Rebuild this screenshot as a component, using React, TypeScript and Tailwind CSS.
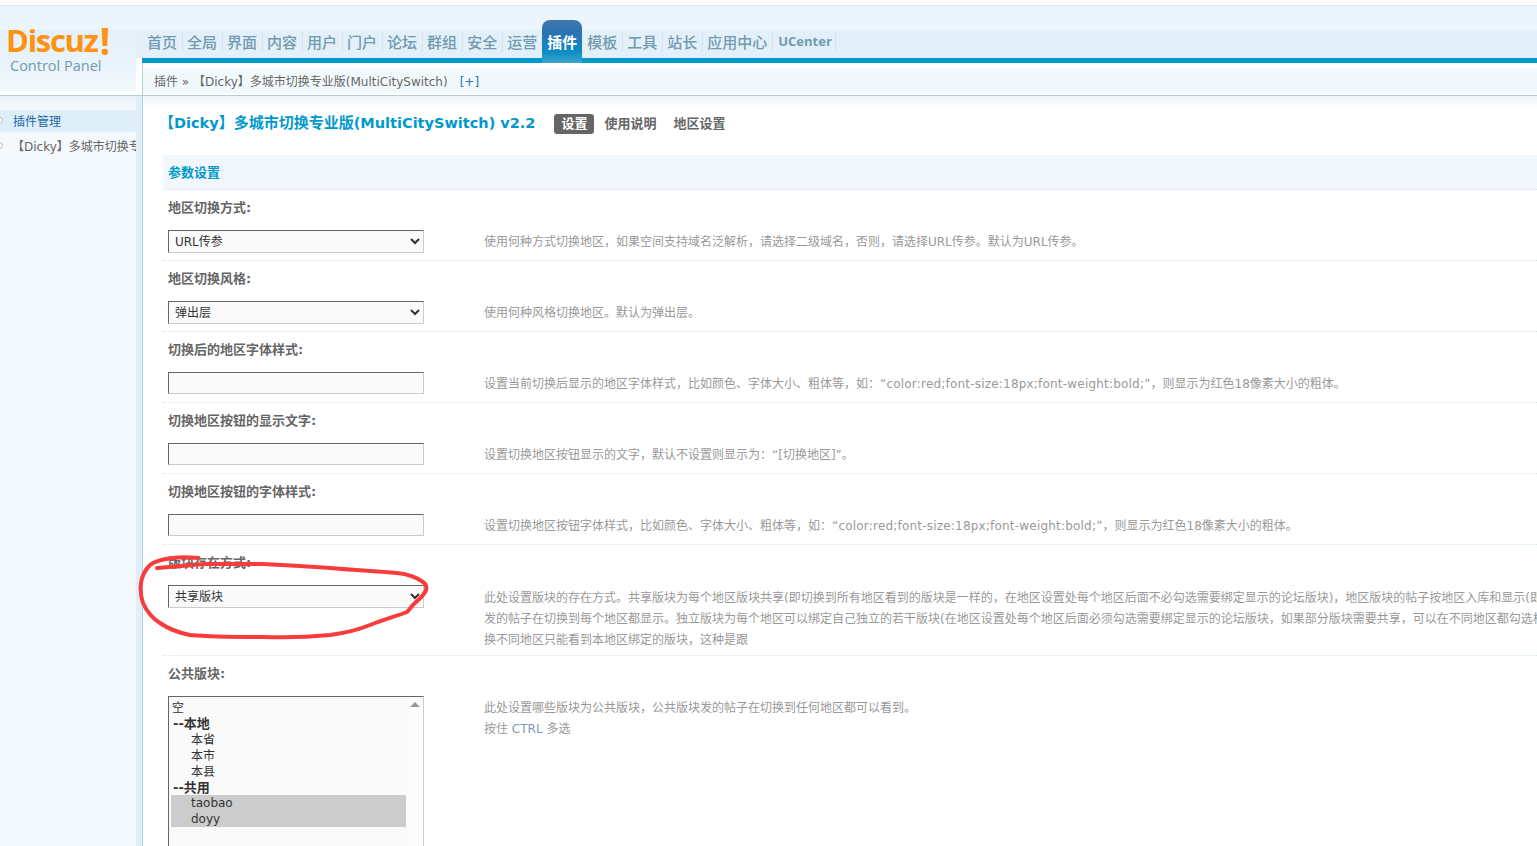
import React from 'react';

const BODY_FONT = "font-['DejaVu_Sans','Noto_Sans_CJK_SC',sans-serif]";

const NAV_ITEMS = ['首页', '全局', '界面', '内容', '用户', '门户', '论坛', '群组', '安全', '运营'];
const NAV_ITEMS_AFTER = ['模板', '工具', '站长', '应用中心'];

function NavItem({ label, lastBeforeActive }: { label: string; lastBeforeActive?: boolean }) {
  return (
    <div
      className={`mt-[26px] flex h-[20px] items-center border-r pr-[5px] font-['Noto_Sans_CJK_SC',sans-serif] text-[15px] font-medium leading-[20px] text-[#6f9ab0] ${
        lastBeforeActive ? 'border-transparent' : 'mr-[4px] border-[#d3e4ef]'
      }`}
    >
      {label}
    </div>
  );
}

function Logo() {
  return (
    <div className="flex h-[85px] bg-white">
      <div className="w-[136px] bg-[linear-gradient(to_bottom,#ecf4fc_0,#ecf4fc_24px,#e5f1fa_24px,#e8f3fb_55px,#f2f8fd_85px)] pl-[6px] pt-[18px]">
        <div className="flex h-[33px] items-end font-['Open_Sans',sans-serif] text-[31px] font-bold leading-[33px] tracking-[-1.3px] text-[#ff9210]">
          Discuz<span className="ml-[2px] text-[38px] leading-[33px]">!</span>
        </div>
        <div className="ml-[4px] font-['Open_Sans',sans-serif] text-[14.5px] leading-[18px] text-[#6f9ab0]">
          Control Panel
        </div>
      </div>
      <div className="flex w-[7px] flex-col">
        <div className="h-[52px] bg-[linear-gradient(to_bottom,#ecf4fc_0,#ecf4fc_24px,#e3f0f9_24px)]" />
      </div>
    </div>
  );
}

function Sidebar() {
  return (
    <div className="flex flex-1 overflow-hidden">
      <div className="w-[136px] overflow-hidden bg-[linear-gradient(to_bottom,#e9f2f8_0,#f3f9fd_12px)] pt-[14px]">
        <div className="relative flex h-[22px] items-center bg-[#deeffa] pl-[13px] pt-[1px] text-[12px] text-[#2366a8]">
          <span className="absolute left-[-4px] top-[7px] h-[7px] w-[7px] rounded-full border border-[#bbb] bg-white" />
          插件管理
        </div>
        <div className="relative mt-[3px] flex h-[22px] items-center whitespace-nowrap pl-[12px] pt-[1px] text-[12px] text-[#666]">
          <span className="absolute left-[-4px] top-[7px] h-[7px] w-[7px] rounded-full border border-[#bbb] bg-white" />
          【Dicky】多城市切换专业版
        </div>
      </div>
      <div className="w-[6px] bg-[#deeffa]" />
    </div>
  );
}

function Row({
  label,
  control,
  desc,
  tall,
}: {
  label: string;
  control: React.ReactNode;
  desc: React.ReactNode[];
  tall?: boolean;
}) {
  return (
    <div className={`border-b border-dotted border-[#cfe6f3] ${tall ? 'h-[111px]' : 'h-[71px]'}`}>
      <div className="flex h-[36px] items-center pl-[5px] text-[13px] font-bold text-[#666]">{label}</div>
      <div className="mt-[4px] flex pl-[5px]">
        <div className="w-[256px] shrink-0">{control}</div>
        <div className={`ml-[60px] whitespace-nowrap text-[12px] leading-[21px] text-[#999] ${tall ? 'pt-[3px]' : 'pt-[2px]'}`}>
          {desc.map((line, i) => (
            <div key={i}>{line}</div>
          ))}
        </div>
      </div>
    </div>
  );
}

function FakeSelect({ value }: { value: string }) {
  return (
    <select
      defaultValue={value}
      className={`block h-[23px] w-[256px] border border-[#ccc] border-l-[#666] border-t-[#666] bg-[#fafafa] pl-[2px] text-[12px] text-[#333] ${BODY_FONT}`}
    >
      <option>{value}</option>
    </select>
  );
}

function TextField() {
  return (
    <input
      type="text"
      className="block h-[22px] w-[256px] border border-[#ccc] border-l-[#666] border-t-[#666] bg-[#fafafa]"
    />
  );
}

function ListBox() {
  const Opt = ({ text, bold, sub, sel }: { text: string; bold?: boolean; sub?: boolean; sel?: boolean }) => (
    <div
      className={`h-[16px] leading-[16px] text-[#333] ${bold ? 'pl-[2px] text-[13px] font-bold' : 'text-[12px]'} ${sub ? 'pl-[20px]' : ''} ${!bold && !sub ? 'pl-[1px]' : ''} ${sel ? 'bg-[#ccc]' : 'pt-[1px]'}`}
    >
      {text}
    </div>
  );
  return (
    <div className="flex h-[200px] w-[256px] border border-[#ccc] border-l-[#666] border-t-[#666] bg-[#fafafa] pl-[2px] pt-[2px]">
      <div className="w-[235px]">
        <Opt text="空" />
        <Opt text="--本地" bold />
        <Opt text="本省" sub />
        <Opt text="本市" sub />
        <Opt text="本县" sub />
        <Opt text="--共用" bold />
        <Opt text="taobao" sub sel />
        <Opt text="doyy" sub sel />
      </div>
      <div className="flex w-[17px] justify-center bg-[#fcfcfc] pt-[3px]">
        <div className="h-0 w-0 border-x-[5px] border-b-[5px] border-x-transparent border-b-[#999]" />
      </div>
    </div>
  );
}

// hand drawn circle somebody put on the screenshot
function Scribble() {
  return (
    <svg className="pointer-events-none absolute left-0 top-0 z-20" width="1537" height="846" viewBox="0 0 1537 846" fill="none">
      <path
        d="M198 558C188 557 180 557 173 558C163 559 155 561 150 565C145 570 142 576 141 583C140 590 141 597 143 603C147 612 152 618 160 623C170 630 180 633 190 635C215 637 240 637 263 637C290 638 310 637 330 635C345 633 358 630 370 625C385 619 397 616 407 612C410 609 411 607 413 605C418 600 424 596 426 590C427 586 426 584 423 582C415 576 407 574 397 573C375 571 352 570 330 568C305 566 285 565 263 564C245 564 225 564 207 564C190 565 172 567 157 568"
        stroke="#f83c3c"
        strokeWidth="4"
        strokeLinecap="round"
      />
    </svg>
  );
}

const CssSample = () => <span className="tracking-[0.2px]">“color:red;font-size:18px;font-weight:bold;”</span>;

export default function App() {
  return (
    <div className={`relative flex h-screen w-full flex-col overflow-hidden bg-white ${BODY_FONT}`}>
      <div className="h-[6px] shrink-0 border-b border-[#dfe3e6] bg-white" />
      <div className="flex min-h-0 flex-1">
        <div className="flex w-[143px] shrink-0 flex-col border-r-0">
          <Logo />
          <div className="h-[4px] bg-white" />
          <div className="h-[1px] bg-[#b5cfd9]" />
          <Sidebar />
        </div>
        <div className="flex min-w-0 flex-1 flex-col">
          <div className="ml-[-1px] flex h-[52px] shrink-0 bg-[linear-gradient(to_bottom,#ecf4fc_0,#ecf4fc_24px,#e3f0f9_24px)] pl-[5px]">
            {NAV_ITEMS.map((item, i) => (
              <NavItem key={item} label={item} lastBeforeActive={i === NAV_ITEMS.length - 1} />
            ))}
            <div className="relative z-10 ml-[-1px] mr-[5px] mt-[14px] h-[43px] w-[40px] rounded-t-[8px] bg-[linear-gradient(to_bottom,#4079b0_0,#2b72b2_30%,#0d8cc6_75%,#3ba6cc_100%)] pl-[5px] pt-[12px] font-['Noto_Sans_CJK_SC',sans-serif] text-[15px] font-bold leading-[20px] text-white">
              插件
            </div>
            {NAV_ITEMS_AFTER.map((item) => (
              <NavItem key={item} label={item} />
            ))}
            <div className="ml-[1px] mt-[26px] flex h-[20px] items-center border-r border-[#d3e4ef] pr-[3px] font-['Open_Sans',sans-serif] text-[13px] font-bold text-[#6f9ab0]">
              UCenter
            </div>
          </div>
          <div className="ml-[-1px] h-[5px] shrink-0 bg-[#0099cc]" />
          <div className="ml-[-1px] flex min-h-0 flex-1 flex-col border-l border-[#b5cfd9]">
            <div className="mt-[5px] flex h-[25px] shrink-0 items-center bg-[#f2f9fd] pl-[11px] pt-[2px] text-[12px] text-[#666]">
              插件 »&nbsp;【Dicky】多城市切换专业版(MultiCitySwitch)
              <span className="ml-[12px] text-[#3670b0]">[+]</span>
            </div>
            <div className="mt-[2px] h-[1px] shrink-0 bg-[#b5cfd9]" />
            <div className="min-h-0 flex-1 overflow-hidden bg-[linear-gradient(to_bottom,#eef5f9_0,#ffffff_14px)] pl-[20px]">
              <div className="flex h-[59px] items-center pb-[4px]">
                <span className="ml-[-4px] whitespace-nowrap text-[15px] font-bold text-[#0099cc]">
                  【<span className="text-[14.5px]">Dicky</span>】多城市切换专业版<span className="text-[14.5px]">(MultiCitySwitch) v2.2</span>
                </span>
                <span className="ml-[19px] flex h-[20px] w-[40px] items-center justify-center rounded-[3px] bg-[#666] text-[13px] font-bold text-white">
                  设置
                </span>
                <span className="ml-[10px] text-[13px] font-bold text-[#666]">使用说明</span>
                <span className="ml-[17px] text-[13px] font-bold text-[#666]">地区设置</span>
              </div>
              <div className="flex h-[35px] items-center border-b border-dotted border-[#cfe6f3] bg-[#f2f7fd] pl-[5px] pt-[1px] text-[13px] font-bold text-[#0099cc]">
                参数设置
              </div>
              <Row
                label="地区切换方式:"
                control={<FakeSelect value="URL传参" />}
                desc={['使用何种方式切换地区，如果空间支持域名泛解析，请选择二级域名，否则，请选择URL传参。默认为URL传参。']}
              />
              <Row
                label="地区切换风格:"
                control={<FakeSelect value="弹出层" />}
                desc={['使用何种风格切换地区。默认为弹出层。']}
              />
              <Row
                label="切换后的地区字体样式:"
                control={<TextField />}
                desc={[<>设置当前切换后显示的地区字体样式，比如颜色、字体大小、粗体等，如：<CssSample />，则显示为红色18像素大小的粗体。</>]}
              />
              <Row
                label="切换地区按钮的显示文字:"
                control={<TextField />}
                desc={['设置切换地区按钮显示的文字，默认不设置则显示为：“[切换地区]”。']}
              />
              <Row
                label="切换地区按钮的字体样式:"
                control={<TextField />}
                desc={[<>设置切换地区按钮字体样式，比如颜色、字体大小、粗体等，如：<CssSample />，则显示为红色18像素大小的粗体。</>]}
              />
              <Row
                label="版块存在方式:"
                control={<FakeSelect value="共享版块" />}
                tall
                desc={[
                  '此处设置版块的存在方式。共享版块为每个地区版块共享(即切换到所有地区看到的版块是一样的，在地区设置处每个地区后面不必勾选需要绑定显示的论坛版块)，地区版块的帖子按地区入库和显示(即',
                  '发的帖子在切换到每个地区都显示。独立版块为每个地区可以绑定自己独立的若干版块(在地区设置处每个地区后面必须勾选需要绑定显示的论坛版块，如果部分版块需要共享，可以在不同地区都勾选相',
                  '换不同地区只能看到本地区绑定的版块，这种是跟',
                ]}
              />
              <div>
                <div className="flex h-[36px] items-center pl-[5px] text-[13px] font-bold text-[#666]">公共版块:</div>
                <div className="mt-[4px] flex pl-[5px]">
                  <div className="w-[256px] shrink-0">
                    <ListBox />
                  </div>
                  <div className="ml-[60px] whitespace-nowrap pt-[2px] text-[12px] leading-[21px] text-[#999]">
                    <div>此处设置哪些版块为公共版块，公共版块发的帖子在切换到任何地区都可以看到。</div>
                    <div>
                      按住 <span className="text-[#7a9cb8]">CTRL</span> 多选
                    </div>
                  </div>
                </div>
              </div>
            </div>
          </div>
        </div>
      </div>
      <Scribble />
    </div>
  );
}
